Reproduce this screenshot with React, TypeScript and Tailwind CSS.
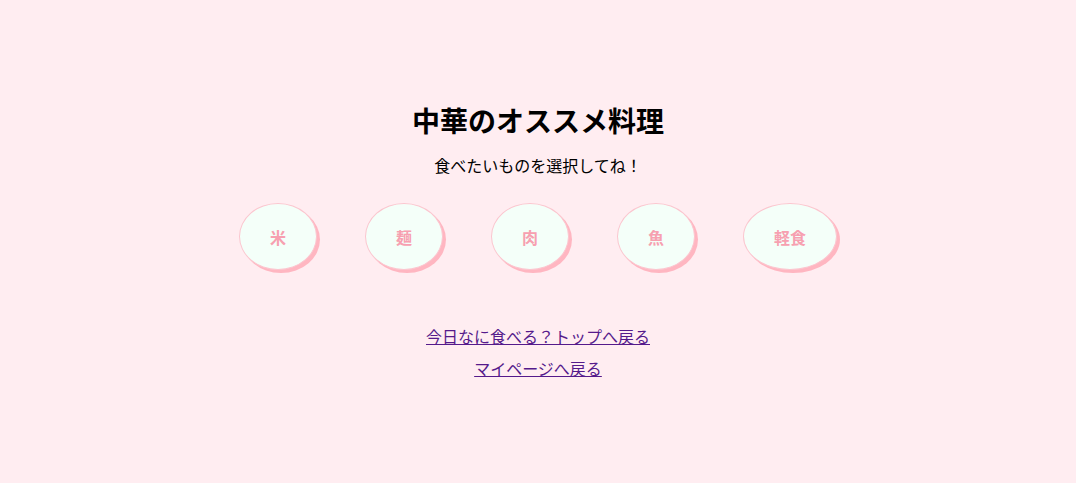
const dishes = ["米", "麺", "肉", "魚", "軽食"];

const App = () => {
  return (
    <div className="flex min-h-[483px] w-full flex-col items-center bg-[#ffedf1] pt-[102px] font-['Noto_Sans_CJK_JP',sans-serif] text-black">
      <h1 className="text-[28px] font-bold leading-[36px]">中華のオススメ料理</h1>
      <p className="mt-[16px] text-[16px] leading-[22px]">食べたいものを選択してね！</p>
      <div className="mt-[27px] flex items-center gap-[48px]">
        {dishes.map((d) => (
          <button
            key={d}
            className="h-[67px] rounded-[50%] border border-[#fbc6cf] bg-[#f4fff9] px-[30px] text-[16px] font-bold text-[#f7a0b0] shadow-[3px_3px_0_#ffb6c1]"
          >
            {d}
          </button>
        ))}
      </div>
      <div className="mt-[55px] flex flex-col items-center gap-[10px] text-[16px] leading-[22px] text-[#551a8b]">
        <a href="#" className="underline">今日なに食べる？トップへ戻る</a>
        <a href="#" className="underline">マイページへ戻る</a>
      </div>
    </div>
  );
};

export default App;
